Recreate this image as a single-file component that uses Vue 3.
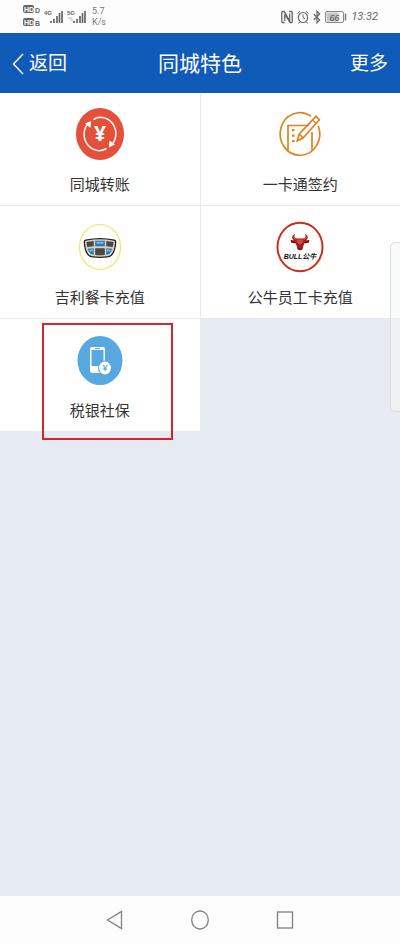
<template>
  <div class="page">
    <div class="status-bar">
      <div class="status-left">
        <svg class="hd" viewBox="0 0 17 25">
          <rect x="0" y="1" width="11" height="8" rx="2" fill="#666" />
          <rect x="0" y="14" width="11" height="8" rx="2" fill="#666" />
          <text x="1" y="8" class="hd-text">HD</text>
          <text x="1" y="21" class="hd-text">HD</text>
          <text x="12" y="9" class="sim-text">D</text>
          <text x="12" y="22" class="sim-text">B</text>
        </svg>
        <svg v-for="net in networks" :key="net" class="signal" viewBox="0 0 19 15">
          <text x="0" y="6" class="net-text">{{ net }}</text>
          <path v-if="net === '5G'" d="M1 9h4M3 11h3" stroke="#bbb" />
          <path d="M7 14v-2M10 14v-4M13 14V7M15.500 14V4M18 14V2" stroke="#666" stroke-width="1.700" />
        </svg>
        <div class="speed"><span>5.7</span><span>K/s</span></div>
      </div>
      <div class="status-right">
        <svg class="nfc" viewBox="0 0 12 14">
          <path d="M3.800 12.500H1.600Q.8 12.500.8 11.500v-9q0-1 .8-1h1.600L8.600 11V3.500M3.800 11V4.500M8.200 1.500h2.200q.8 0 .8 1v9q0 1-.8 1H9L3.800 4" fill="none" stroke="#666" stroke-width="1.300" />
        </svg>
        <svg class="alarm" viewBox="0 0 12 14">
          <ellipse cx="6" cy="7.500" rx="4.600" ry="5" fill="none" stroke="#666" stroke-width="1.200" />
          <path d="M.5 3.500l2.500-2.300M11.500 3.500L9 1.200M6 4.500v3l2 1.500M2.500 12l-1 1.500M9.500 12l1 1.500" fill="none" stroke="#666" />
        </svg>
        <svg class="bluetooth" viewBox="0 0 8 14">
          <path d="M.7 4l6 6L4 12.800V1.200L6.700 4l-6 6" fill="none" stroke="#666" stroke-width="1.200" />
        </svg>
        <svg class="battery" viewBox="0 0 22 12">
          <rect x=".5" y=".5" width="18" height="11" rx="1.500" fill="#fff" stroke="#888" />
          <rect x="1.500" y="1.500" width="12" height="9" fill="#c6c6c6" />
          <path d="M20.500 2.500v7" stroke="#777" stroke-width="1.500" />
          <text x="9.500" y="9.500" class="battery-text">66</text>
        </svg>
        <span class="clock">13:32</span>
      </div>
    </div>

    <header class="nav-bar">
      <button type="button" class="nav-btn">
        <svg class="chevron" viewBox="0 0 12 22"><path d="M11 1L1.500 11 11 21" fill="none" stroke="currentColor" stroke-width="1.400" /></svg>
        返回
      </button>
      <h1>同城特色</h1>
      <button type="button" class="nav-btn more">更多</button>
    </header>

    <main>
      <div class="grid">
        <button v-for="item in items" :key="item.icon" type="button" class="cell">
          <svg v-if="item.icon === 'transfer'" class="icon" viewBox="0 0 50 52">
            <ellipse cx="25" cy="26" rx="24" ry="26" fill="#e5503a" />
            <g fill="none" stroke="#fff" stroke-width="1.500">
              <path d="M18.500 11.500A15 16.300 0 0 1 37.500 36" />
              <path d="M31.500 40.500A15 16.300 0 0 1 12.500 16" />
            </g>
            <path d="M10 15.500l6.200-2.500-.7 7zM40 36.500l-6.200 3 .7-7z" fill="#fff" />
            <text x="25" y="33" class="yen">¥</text>
          </svg>

          <svg v-else-if="item.icon === 'sign'" class="icon" viewBox="0 0 50 52">
            <g fill="none" stroke="#db8420" stroke-width="1.700">
              <path d="M43.300 18A19.800 21.300 0 1 1 36 8.300" />
              <path d="M34 17.500H13v25.500M37 24v19" />
              <path d="M22.300 32.800l2-6.800L41 8.300l3.300 3.500L28 30zM24.300 26l3.700 4" />
            </g>
            <path d="M37.500 12l3.700 3.700" stroke="#db8420" stroke-width="1.200" />
            <path d="M17 21h2.500v2.300H17zM17 26.500h2.500v2.300H17zM17 32h2.500v2.300H17z" fill="#db8420" />
          </svg>

          <svg v-else-if="item.icon === 'geely'" class="icon" viewBox="0 0 50 52">
            <ellipse cx="25" cy="26" rx="20.500" ry="22.500" fill="#fff" stroke="#f2e65c" stroke-width="1.200" />
            <path d="M10.500 18.500q14.500-3 29 0 2.200.4 1.800 3.500C40.500 30.500 38 35.200 34 36.200q-9 1.600-18 0C12 35.200 9.500 30.500 8.700 22q-.4-3.100 1.800-3.500z" fill="#24252a" />
            <path d="M11 19.700q14-2.700 28 0 1.300.3 1 2.300C39.300 30 37 34 33.500 34.900q-8.500 1.500-17 0C13 34 10.700 30 10 22q-.3-2 1-2.300z" fill="#d8cfbd" />
            <path d="M11.500 21q3.500-.8 7.200-1.100v5.300l-6.400.7q-1.200-2.500-.8-4.900zM31.300 19.900q3.700.3 7.200 1.100.4 2.400-.8 4.900l-6.400-.7zM20.200 27.200h9.600v6.900q-4.800.5-9.600 0z" fill="#4b4744" />
            <path d="M20.200 19.700h9.600v5.500h-9.600zM12.800 27.700l5.900-.5v6.700q-4.200-.5-5.900-6.200zM31.300 27.200l5.900.5q-1.700 5.700-5.900 6.200z" fill="#2976be" />
            <path d="M21.500 20.800h7v2h-7zM14 28.700l4-.4v2l-3 .3zM32 28.300l4 .4-1 1.900-3-.3z" fill="#75b6e8" />
          </svg>

          <svg v-else-if="item.icon === 'bull'" class="icon" viewBox="0 0 50 52">
            <ellipse cx="25" cy="26" rx="22.500" ry="24.200" fill="#fff" stroke="#c9301f" stroke-width="2" />
            <path d="M20.500 13c-3.800 1-4.500 4.200-1.500 6.200l-3.700-.2 1.200 2.800 4.300.8 1 3 .7 3q2.500 1.200 5 0l.7-3 1-3 4.300-.8 1.200-2.800-3.700.2c3-2 2.300-5.200-1.500-6.200 2 2 1 4.300-1.500 4.500h-6c-2.500-.2-3.500-2.500-1.500-4.500z" fill="#a81e20" />
            <path d="M21.500 18.500h7l-1.500 5h-4z" fill="#d8483f" />
            <path d="M18.700 15.500q0 2 2.300 3M31.300 15.500q0 2-2.300 3" fill="none" stroke="#df7a70" stroke-width=".8" />
            <path d="M22 22.500l2 1.200M28 22.500l-2 1.200M23.300 28h3.400M16 20.500l4 1M34 20.500l-4 1" stroke="#391313" />
            <text x="25" y="37.500" class="bull-text">BULL公牛</text>
          </svg>

          <svg v-else class="icon" viewBox="0 0 50 52">
            <ellipse cx="25" cy="26.500" rx="22.500" ry="24.500" fill="#56a8df" />
            <rect x="15" y="13" width="15" height="26" rx="2" fill="#fff" />
            <path d="M16.500 16h12v16h-12z" fill="#56a8df" />
            <path d="M20 14.500h5" stroke="#56a8df" />
            <ellipse cx="30" cy="34" rx="7" ry="7.500" fill="#56a8df" />
            <ellipse cx="30" cy="34" rx="6" ry="6.500" fill="#fff" />
            <text x="30" y="37" class="yen-small">¥</text>
          </svg>

          <span>{{ item.label }}</span>
          <i v-if="item.marked" class="mark"></i>
        </button>
      </div>
      <div class="side-handle"></div>
    </main>

    <nav class="system-nav">
      <button type="button" aria-label="返回">
        <svg viewBox="0 0 20 20"><path d="M16.500 1.500v17L2.500 10z" /></svg>
      </button>
      <button type="button" aria-label="主页">
        <svg viewBox="0 0 20 20"><ellipse cx="10" cy="10" rx="8.300" ry="9" /></svg>
      </button>
      <button type="button" aria-label="最近任务">
        <svg viewBox="0 0 20 20"><rect x="2.500" y="2" width="15" height="16" /></svg>
      </button>
    </nav>
  </div>
</template>

<script setup>
const networks = ['4G', '5G'];

const items = [
  { icon: 'transfer', label: '同城转账' },
  { icon: 'sign', label: '一卡通签约' },
  { icon: 'geely', label: '吉利餐卡充值' },
  { icon: 'bull', label: '公牛员工卡充值' },
  { icon: 'tax', label: '税银社保', marked: true },
];
</script>

<style>
body { background: #e6ebf3; }
</style>

<style scoped>
.page {
  min-height: 100vh;
  display: flex;
  flex-direction: column;
  overflow: hidden;
  font-family: "Liberation Sans", "Noto Sans CJK SC", sans-serif;
  color: #333;
}
button { border: none; margin: 0; padding: 0; background: none; color: inherit; font-family: inherit; cursor: pointer; }
svg { display: block; flex: none; }

/* Status bar */
.status-bar {
  display: flex;
  justify-content: space-between;
  align-items: center;
  height: 33px;
  padding: 0 22px 0 23px;
  box-sizing: border-box;
  background: #fdfdfd;
  color: #777;
}
.status-left, .status-right { display: flex; align-items: center; }
.status-left { gap: 4px; }
.status-right { gap: 4px; }
.hd { width: 17px; height: 25px; }
.hd-text { font-size: 7px; font-weight: bold; fill: #fff; }
.sim-text { font-size: 7px; font-weight: bold; fill: #666; }
.signal { width: 19px; height: 15px; }
.net-text { font-size: 6px; font-weight: bold; fill: #666; }
.speed { display: flex; flex-direction: column; margin-left: 2px; font: 9px/11px Roboto, sans-serif; }
.nfc, .alarm { width: 12px; height: 14px; }
.bluetooth { width: 8px; height: 14px; }
.battery { width: 22px; height: 12px; }
.battery-text { font-size: 9px; font-style: italic; text-anchor: middle; fill: #555; }
.clock { font: italic 11px/16px Roboto, sans-serif; color: #666; }

/* Header */
.nav-bar {
  display: grid;
  grid-template-columns: 1fr auto 1fr;
  align-items: center;
  height: 60px;
  padding: 2px 12px 0;
  box-sizing: border-box;
  background: #105ab8;
  color: #fff;
}
.nav-bar h1 { margin: 0; font-size: 21px; font-weight: 400; line-height: 30px; }
.nav-btn { display: flex; align-items: center; gap: 5px; font-size: 19px; line-height: 28px; }
.more { justify-self: end; }
.chevron { width: 12px; height: 22px; }

/* Services */
main { position: relative; flex: 1; background: #e6ebf3; }
.grid { display: grid; grid-template-columns: 1fr 1fr; gap: 1px; }
.cell {
  position: relative;
  display: flex;
  flex-direction: column;
  align-items: center;
  gap: 13px;
  padding: 15px 0 8px;
  background: #fff;
  font-size: 15px;
  line-height: 24px;
}
.icon { width: 50px; height: 52px; }
.yen { font-family: "Noto Sans", sans-serif; font-size: 21px; font-weight: bold; text-anchor: middle; fill: #fff; }
.yen-small { font-size: 9px; font-weight: bold; text-anchor: middle; fill: #56a8df; }
.bull-text { font-size: 7px; font-weight: bold; font-style: italic; text-anchor: middle; fill: #111; }
.mark {
  position: absolute;
  top: 4px;
  left: 42px;
  right: 27px;
  bottom: -9px;
  border: 2px solid #d8232a;
  z-index: 1;
}
.side-handle {
  position: absolute;
  top: 149px;
  right: -4px;
  width: 12px;
  height: 168px;
  border: 1px solid #d9dddf;
  border-radius: 5px;
  background: rgba(244, 247, 246, 0.5);
}

/* System navigation */
.system-nav { display: flex; justify-content: center; align-items: center; gap: 65px; height: 47px; background: #fcfcfc; }
.system-nav svg { width: 20px; height: 20px; fill: none; stroke: #808080; stroke-width: 1.3; }
</style>
